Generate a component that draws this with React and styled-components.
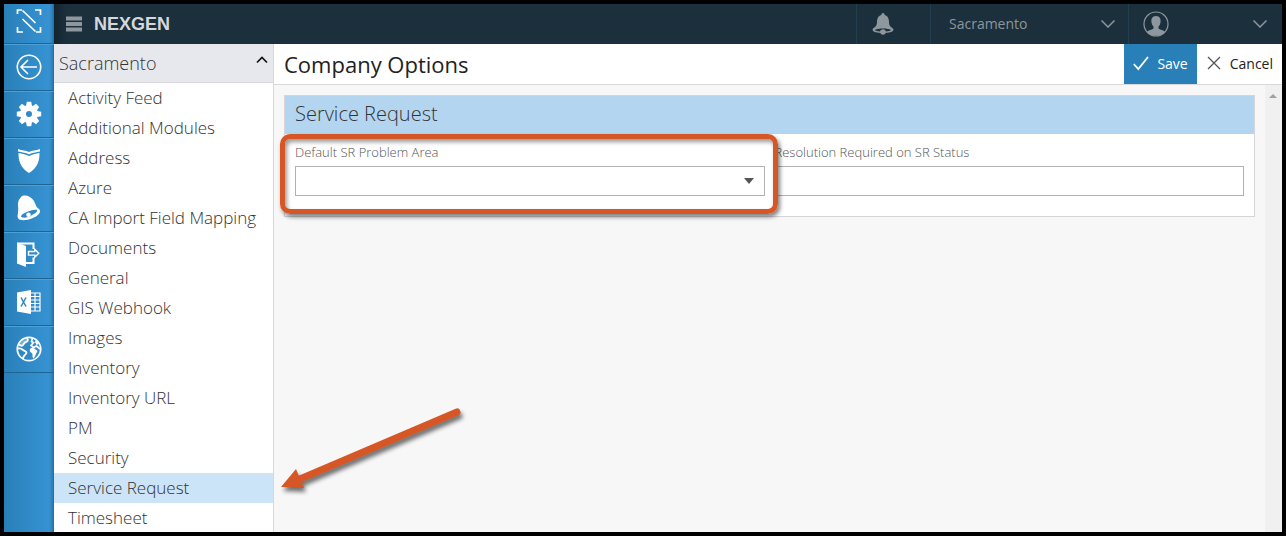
import React from "react";
import styled, { createGlobalStyle } from "styled-components";

const GlobalStyle = createGlobalStyle`
  *, *::before, *::after { box-sizing: border-box; }
  html, body { margin: 0; background: #000; }
  body, button, input, select { font-family: "Open Sans", "Noto Sans", sans-serif; }
  button, input, select { margin: 0; border-radius: 0; }
`;

const Frame = styled.div`
  position: relative;
  display: flex;
  height: 100vh;
  border: 4px solid #000;
  overflow: hidden;
`;

const Rail = styled.nav`
  display: flex;
  flex-direction: column;
  flex: 0 0 50px;
  background: linear-gradient(90deg, #2980b9 0%, #3692d2 90%, #2f83be 96%, #226a9d 100%);
`;

const RailLink = styled.a`
  display: flex;
  align-items: center;
  justify-content: center;
  height: ${(p) => (p.$brand ? 40 : 47)}px;
  padding-bottom: ${(p) => (p.$brand ? 6 : 2)}px;
  border-top: ${(p) => (p.$brand ? 0 : 1)}px solid #4ba0d8;
  border-bottom: 1px solid #1e6596;
  color: #fff;
`;

const Body = styled.div`
  display: flex;
  flex-direction: column;
  flex: 1;
  min-width: 0;
`;

const TopBar = styled.header`
  display: flex;
  flex: 0 0 40px;
  background: linear-gradient(90deg, #13242f 0, #1b2f3c 12px);
  color: #8d979d;
`;

const Brand = styled.div`
  display: flex;
  align-items: center;
  flex: 1;
  gap: 12px;
  padding-left: 12px;
  color: #d4d8da;
  font: bold 18px "Liberation Sans", Arial, sans-serif;
`;

const PlainButton = styled.button`
  display: flex;
  align-items: center;
  padding: 0;
  border: 0;
  background: none;
  color: inherit;
`;

const MenuButton = styled(PlainButton)`
  color: #8d979d;
`;

const AlertButton = styled(PlainButton)`
  justify-content: center;
  width: 74px;
  padding-right: 22px;
  border-left: 1px solid #223e4f;
`;

const CompanyPicker = styled.label`
  display: flex;
  align-items: center;
  width: 198px;
  padding-right: 13px;
  border-left: 1px solid #223e4f;
`;

const CompanySelect = styled.select`
  flex: 1;
  min-width: 0;
  height: 40px;
  padding: 0 0 2px 18px;
  appearance: none;
  border: 0;
  background: none;
  color: #8d979d;
  font-size: 14px;
`;

const UserButton = styled(PlainButton)`
  justify-content: space-between;
  width: 154px;
  padding: 0 15px 0 14px;
  border-left: 1px solid #223e4f;
`;

const Workspace = styled.div`
  display: flex;
  flex: 1;
  min-height: 0;
`;

const Sidebar = styled.aside`
  flex: 0 0 220px;
  overflow: hidden;
  border-right: 1px solid #d8d8d8;
  background: #fff;
`;

const SidebarHeader = styled(PlainButton)`
  justify-content: space-between;
  width: 100%;
  height: 39px;
  padding: 0 5px;
  border-bottom: 1px solid #d8d8da;
  background: #e7e8ed;
  color: #333;
  font-size: 18px;
  font-weight: 300;

  svg { margin-bottom: 6px; color: #111; }
`;

const OptionList = styled.ul`
  margin: 0;
  padding: 0;
  list-style: none;
`;

const OptionLink = styled.a`
  display: block;
  height: 30px;
  padding-left: 14px;
  background: ${(p) => (p.$selected ? "#cce4f7" : "transparent")};
  color: #333;
  font-size: 17px;
  font-weight: 300;
  line-height: 30px;
  text-decoration: none;
  white-space: nowrap;
`;

const Main = styled.main`
  display: flex;
  flex-direction: column;
  flex: 1;
  min-width: 0;
  background: #f7f7f7;
`;

const TitleBar = styled.div`
  display: flex;
  flex: 0 0 41px;
  border-bottom: 1px solid #d8d8d8;
  background: #fff;
`;

const Title = styled.h1`
  flex: 1;
  margin: 0;
  padding-left: 10px;
  color: #222;
  font-size: 22px;
  font-weight: 400;
  line-height: 40px;
`;

const ActionButton = styled(PlainButton)`
  gap: 8px;
  padding: 0 9px 2px;
  background: ${(p) => (p.$primary ? "#2980b9" : "#fff")};
  color: ${(p) => (p.$primary ? "#fff" : "#222")};
  font-size: 14px;
`;

const Content = styled.div`
  display: flex;
  flex: 1;
  min-height: 0;
`;

const Page = styled.div`
  flex: 1;
  min-width: 0;
  padding: 10px;
`;

const ScrollTrack = styled.div`
  flex: 0 0 17px;
  padding: 7px 0 0 4px;
  background: #f0f0f0;
  line-height: 0;
`;

const Card = styled.section`
  border: 1px solid #d5d5d9;
  background: #fff;
`;

const CardTitle = styled.h2`
  margin: 0;
  padding: 0 10px 2px;
  background: #b3d5f0;
  color: #333;
  font-size: 20px;
  font-weight: 300;
  line-height: 36px;
`;

const Fields = styled.div`
  display: grid;
  grid-template-columns: 1fr 1fr;
  gap: 10px;
  padding: 8px 10px 20px;
`;

const Field = styled.div`
  position: relative;
`;

const FieldLabel = styled.label`
  display: block;
  height: 24px;
  color: #555;
  font-size: 13px;
  font-weight: 300;
  line-height: 20px;
`;

const SelectBox = styled.div`
  display: flex;
  align-items: center;
  height: 30px;
  padding-right: 10px;
  border: 1px solid #b2b2b2;
  background: #fff;
`;

const FieldSelect = styled.select`
  flex: 1;
  min-width: 0;
  height: 28px;
  appearance: none;
  border: 0;
  background: none;
`;

const TextInput = styled.input`
  display: block;
  width: 100%;
  height: 30px;
  border: 1px solid #b2b2b2;
  background: #fff;
`;

const Highlight = styled.div`
  position: absolute;
  z-index: 1;
  inset: -8px -13px -18px -15px;
  border: 5px solid #d75625;
  border-radius: 10px;
  box-shadow: 2px 3px 4px rgba(0, 0, 0, 0.5), inset 2px 3px 4px rgba(0, 0, 0, 0.4);
  pointer-events: none;
`;

const Pointer = styled.svg`
  position: absolute;
  left: 270px;
  top: 396px;
  filter: drop-shadow(2px 4px 2px rgba(0, 0, 0, 0.55));
  pointer-events: none;
`;

const Icon = ({ size = 26, width = size, height = size, box, children }) => (
  <svg
    width={width}
    height={height}
    viewBox={box || `0 0 ${width} ${height}`}
    fill="none"
    stroke="currentColor"
    strokeWidth="1.6"
    aria-hidden="true"
  >
    {children}
  </svg>
);

const Logo = () => (
  <Icon width={26} height={24}>
    <path d="M1.500 5V1H6M19 1h5.500v5M1.500 18v5H7M20 23h4.500v-5M6.500 1.500l13 12.500M6.500 10l13 12.500" strokeWidth="1.7" />
  </Icon>
);

const Back = () => (
  <Icon>
    <circle cx="13" cy="13" r="11.7" />
    <path d="M21 13H5M12 6l-7 7 7 7" />
  </Icon>
);

const teeth = [0, 45, 90, 135, 180, 225, 270, 315];
const Gear = () => (
  <Icon>
    <circle cx="13" cy="13" r="6" strokeWidth="6" />
    {teeth.map((a) => (
      <path key={a} d="M10 5 10.8 .8h4.4L16 5z" fill="currentColor" stroke="none" transform={`rotate(${a} 13 13)`} />
    ))}
  </Icon>
);

const Shield = () => (
  <Icon>
    <path d="M2 1c4 2 8 1 11 3 3-2 7-1 11-3v2.500c-4 1-8 1-11 3-3-2-7-2-11-3z" fill="currentColor" stroke="none" />
    <path d="M2.500 5c4 1 7.500 1 10.500 3.300 3-2.300 6.500-2.300 10.500-3.300.2 9-3 15.500-10.500 20C5.500 20.500 2.300 14 2.500 5z" fill="currentColor" stroke="none" />
  </Icon>
);

const TiltedBell = () => (
  <Icon>
    <path d="M5 2c3-3 10-1 13 4 2 4 2 6 5 8 3 3-1 7-6 9-7 3-14 3-15 0-1-2 0-3 0-6 1-5-2-10 3-15z" fill="currentColor" stroke="none" />
    <path d="M5 21.500c0-3 12-8 16-6.500 1 3-6 5-7 6.500-3 1-7 2-9 0z" fill="#2f89c6" stroke="none" />
    <circle cx="12.500" cy="19.800" r="2.300" fill="currentColor" stroke="none" />
  </Icon>
);

const Exit = () => (
  <Icon>
    <path d="M1 .5 10 4v21l-9-3.500z" fill="currentColor" stroke="none" />
    <path d="M1 1.500h16.500V7M17.500 15.500V21H10" strokeWidth="2" />
    <path d="M12.500 9.500h6.200V7.300l4 4-4 4v-2.200h-6.200z" strokeWidth="1.400" />
  </Icon>
);

const Sheet = () => (
  <Icon>
    <path d="M1 3.500 15 1v24L1 22.500z" fill="currentColor" stroke="none" />
    <path d="M15 4h9v18h-9M15 7.500h9M15 11h9M15 14.500h9M15 18h9M19 4v18" strokeWidth="1.200" />
    <path d="M5 8.500l5 9M10 8.500l-5 9" stroke="#2c84c0" strokeWidth="1.500" />
  </Icon>
);

const Globe = () => (
  <Icon>
    <circle cx="13" cy="13" r="11.700" strokeWidth="1.700" />
    <path
      d="M3 8.500c2 0 2 1.500 3.500 1 2-1 1.500-3 3.500-3.500 2 0 3-1.500 1.500-3L10 1.500C6.500 2.500 4 5 3 8.500z"
      fill="currentColor"
      stroke="none"
      fillOpacity=".35"
    />
    <path
      d="M2.500 9c2-.5 2.500 1.500 4 .5 2-1.500 1-3 3.500-3.500 2-.5 2.500-2 1-4M2 12.500c2-.5 3.500 0 5 1.500 1.500 1 3.500 1 3.500 2.500 0 2-2.500 2.500-3 4.500-.2 1-.5 1.500-1.500.5"
      strokeWidth="1.900"
    />
    <path
      d="M16.500 2l-1 3.500 2 1-2.500 3 2.500 2 3-1.500 3.500 3"
      strokeWidth="1.700"
    />
    <path
      d="M14 13c1.500-2 4-1.500 5.500.5 1 1 2.500 1 1.500 2.500-1.500 2-1.500 4.500-3.500 6.500-1.500-1-.5-4-1.500-5.500-1.500-.5-3-2-2-4z"
      fill="currentColor"
      stroke="none"
    />
    <path d="M20 3.500l3 4.500-2.500 1-1.500-3z" fill="currentColor" stroke="none" />
  </Icon>
);

const Burger = () => (
  <Icon size={16}>
    <path d="M0 2.500h16M0 8h16M0 13.500h16" strokeWidth="4" />
  </Icon>
);

const Bell = () => (
  <Icon width={22} height={22}>
    <path d="M11 0c1.200 0 1.700 1 1.700 2C16 3 17 6 17 9c0 4 2 5 4 6.500 2 3-3 4.500-10 4.500S-1 18.500 1 15.500C3 14 5 13 5 9c0-3 1-6 4.300-7 0-1 .5-2 1.700-2z" fill="currentColor" stroke="none" />
    <path d="M3 17c3-2 13-2 16 0-1 1-3 1.300-5 1.500-1-2-5-2-6 0-2-.2-4-.5-5-1.500z" fill="#1b2f3c" stroke="none" />
    <circle cx="11" cy="19" r="2.700" fill="currentColor" stroke="none" />
  </Icon>
);

const User = () => (
  <Icon>
    <circle cx="13" cy="13" r="12" strokeWidth="1.200" />
    <path d="M13 5c4 0 5 3 4.500 6.500-.4 2-1 3-2 4v2c2 1.500 5 1.500 6.500 3.500-4 5-14 5-18 0 1.500-2 4.500-2 6.500-3.500v-2c-1-1-1.600-2-2-4C8 8 9 5 13 5z" fill="currentColor" stroke="none" />
  </Icon>
);

const ChevronDown = () => (
  <Icon width={14} height={8}>
    <path d="M.5 .5 7 7 13.500 .5" strokeWidth="1.500" />
  </Icon>
);

const ChevronUp = () => (
  <Icon width={12} height={8}>
    <path d="M1 6.500 6 1.500l5 5" strokeWidth="1.700" />
  </Icon>
);

const Check = () => (
  <Icon size={16}>
    <path d="M.8 9l4.500 5L15 2" strokeWidth="1.800" />
  </Icon>
);

const Cross = () => (
  <Icon width={16} height={14}>
    <path d="M2 1l12 12M14 1L2 13" stroke="#555" strokeWidth="1.300" />
  </Icon>
);

const railItems = [
  ["Back", Back],
  ["Settings", Gear],
  ["Security", Shield],
  ["Alerts", TiltedBell],
  ["Sign out", Exit],
  ["Spreadsheet", Sheet],
  ["Map", Globe],
];

const options = [
  "Activity Feed",
  "Additional Modules",
  "Address",
  "Azure",
  "CA Import Field Mapping",
  "Documents",
  "General",
  "GIS Webhook",
  "Images",
  "Inventory",
  "Inventory URL",
  "PM",
  "Security",
  "Service Request",
  "Timesheet",
];

export default function App() {
  return (
    <>
      <GlobalStyle />
      <Frame>
        <Rail>
          <RailLink href="#home" $brand aria-label="Home">
            <Logo />
          </RailLink>
          {railItems.map(([name, Glyph]) => (
            <RailLink key={name} href="#" aria-label={name}>
              <Glyph />
            </RailLink>
          ))}
        </Rail>
        <Body>
          <TopBar>
            <Brand>
              <MenuButton aria-label="Menu">
                <Burger />
              </MenuButton>
              NEXGEN
            </Brand>
            <AlertButton aria-label="Notifications">
              <Bell />
            </AlertButton>
            <CompanyPicker>
              <CompanySelect aria-label="Company" defaultValue="Sacramento">
                <option>Sacramento</option>
              </CompanySelect>
              <ChevronDown />
            </CompanyPicker>
            <UserButton aria-label="Account">
              <User />
              <ChevronDown />
            </UserButton>
          </TopBar>
          <Workspace>
            <Sidebar>
              <SidebarHeader aria-expanded="true">
                Sacramento
                <ChevronUp />
              </SidebarHeader>
              <OptionList>
                {options.map((name) => (
                  <li key={name}>
                    <OptionLink href="#" $selected={name === "Service Request"}>
                      {name}
                    </OptionLink>
                  </li>
                ))}
              </OptionList>
            </Sidebar>
            <Main>
              <TitleBar>
                <Title>Company Options</Title>
                <ActionButton $primary>
                  <Check />
                  Save
                </ActionButton>
                <ActionButton>
                  <Cross />
                  Cancel
                </ActionButton>
              </TitleBar>
              <Content>
                <Page>
                  <Card>
                    <CardTitle>Service Request</CardTitle>
                    <Fields>
                      <Field>
                        <FieldLabel htmlFor="problem-area">Default SR Problem Area</FieldLabel>
                        <SelectBox>
                          <FieldSelect id="problem-area" />
                          <Icon width={10} height={6}>
                            <path d="M0 0h10L5 6z" fill="#555" stroke="none" />
                          </Icon>
                        </SelectBox>
                        <Highlight />
                      </Field>
                      <Field>
                        <FieldLabel htmlFor="resolution">Resolution Required on SR Status</FieldLabel>
                        <TextInput id="resolution" type="text" />
                      </Field>
                    </Fields>
                  </Card>
                </Page>
                <ScrollTrack>
                  <Icon width={8} height={4}>
                    <path d="M4 0l4 4H0z" fill="#a0a0a0" stroke="none" />
                  </Icon>
                </ScrollTrack>
              </Content>
            </Main>
          </Workspace>
        </Body>
        <Pointer width="196" height="100" viewBox="0 0 196 100" aria-hidden="true">
          <path d="M26 79L183 12" stroke="#d75625" strokeWidth="7" strokeLinecap="round" />
          <path d="M7 87L22 69l8 19z" fill="#d75625" />
        </Pointer>
      </Frame>
    </>
  );
}
